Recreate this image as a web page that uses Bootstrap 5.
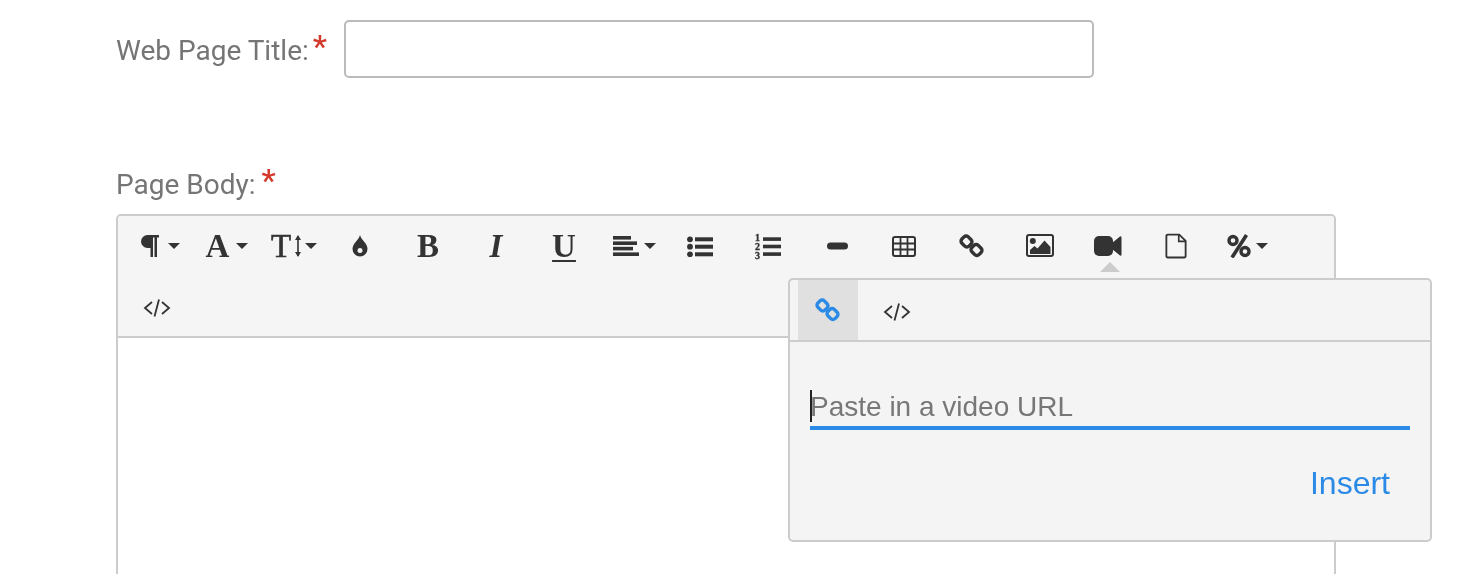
<!DOCTYPE html>
<html lang="en">
<head>
<meta charset="utf-8">
<title>Page editor</title>
<link href="https://cdn.jsdelivr.net/npm/bootstrap@5.3.0/dist/css/bootstrap.min.css" rel="stylesheet">
<style>
html,body{height:574px;overflow:hidden;background:#fff}
body{font-family:Roboto,sans-serif;color:#333}
.pg{padding:20px 0 0 116px;width:1480px;height:574px;overflow:hidden;will-change:transform}
.lbl{font-size:28px;color:#757575;margin:0}
.req{color:#d33a2c;font-size:32px;font-weight:500;line-height:1;display:inline-block;position:relative;margin-left:4px}
.title-row{height:58px}
.title-row .lbl{width:228px;flex:none;white-space:nowrap;line-height:61px}
.title-row .req{top:-3px}
.title-row .form-control{width:750px;height:58px;border:2px solid #bbb;border-radius:5px;box-shadow:none}
.body-lbl{margin-top:78px;height:58px}
.body-lbl .lbl{line-height:58px}
.body-lbl .req{top:-3px;margin-left:6px}
.ed{position:relative;width:1220px;height:500px;border:2px solid #ccc;border-radius:5px;background:#fff}
.tb{background:#f5f5f5;border-bottom:2px solid #ccc;height:122px;padding:0 8px 0 4px;border-radius:3px 3px 0 0;flex-wrap:wrap;align-content:flex-start;row-gap:2px}
.tbtn{width:68px;height:60px;padding:0;border:0;border-radius:0;background:none;color:#333;display:flex;align-items:center;justify-content:center;line-height:1}
.serif{font-family:"Liberation Serif",serif;font-size:33px;font-weight:700;color:#333}
.tt{font-weight:400;-webkit-text-stroke:.6px #333}
.under{text-decoration:underline;text-decoration-thickness:2px;text-underline-offset:3px}
.pa{padding-left:6px}
.pt{padding-left:4px}
.pp{padding-left:9px}
.pc{padding-left:2px}
.ph{padding-left:2px}
.pct{padding-left:6px}
.car{display:inline-block;width:0;height:0;border:6px solid transparent;border-top:6px solid #333;border-bottom:0;margin-left:5px}
.c9{margin-left:9px}
.c7{margin-left:7px}
.c4{margin-left:4px}
.pop{position:absolute;left:670px;top:62px;width:644px;height:264px;background:#f4f4f4;border:2px solid #ccc;border-radius:5px}
.pop-arrow{position:absolute;left:982px;top:46px;width:0;height:0;border:10px solid transparent;border-bottom:10px solid #ccc;border-top:0}
.tabs{height:62px;border-bottom:2px solid #ccc;padding-left:8px}
.tab{width:60px;height:60px;padding:0;border:0;border-radius:0;display:flex;align-items:center;justify-content:center;background:none}
.tab.on{background:#e0e0e0}
.tab+.tab{width:78px;padding-top:3px}
.fld{position:relative;margin:40px 20px 0;height:48px;border-bottom:4px solid #2a8ae6}
.fld input{width:100%;height:50px;border:0;background:none;outline:0;padding:0;font-family:"Liberation Sans",sans-serif;font-size:28px;color:#333}
.fld input::placeholder{color:#777;opacity:1}
.cur{position:absolute;left:0;top:8px;width:2px;height:32px;background:#222}
.ins{font-family:"Liberation Sans",sans-serif;font-size:32px;color:#2a8ae6;padding:0;border:0;background:none;line-height:36px}
.foot{margin-top:35px;padding-right:40px}
.num{font-family:"Liberation Serif",serif;font-weight:700;font-size:10px;stroke:#333;stroke-width:.35px}
svg{display:block}
</style>
</head>
<body>
<div class="pg">
  <div class="d-flex title-row">
    <label class="lbl" for="t">Web Page Title:<span class="req">*</span></label>
    <input id="t" class="form-control" type="text">
  </div>
  <div class="body-lbl"><span class="lbl">Page Body:<span class="req">*</span></span></div>
  <div class="ed">
    <div class="tb d-flex">
      <button class="btn tbtn pp" aria-label="Paragraph format"><svg width="18" height="22" viewBox="0 0 18 22" fill="#333"><path d="M18 0H6.500a6.500 6.500 0 0 0 0 13H9.500v9H12V2.500h1.500V22H16V2.500h2z"/></svg><i class="car c9"></i></button>
      <button class="btn tbtn pa"><span class="serif">A</span><i class="car c7"></i></button>
      <button class="btn tbtn pt"><span class="serif tt">T</span><svg class="ms-1" width="6" height="24" viewBox="0 0 6 24"><path d="M3 2v20" stroke="#333" stroke-width="1.600"/><path d="M0 6l3-5 3 5zM0 18l3 5 3-5z" fill="#333"/></svg><i class="car c4"></i></button>
      <button class="btn tbtn"><svg width="16" height="22" viewBox="0 0 16 22"><path fill="#333" fill-rule="evenodd" d="M8 0c1 5 7.500 8 7.500 14a7.500 7.500 0 0 1-15 0C.5 8 7 5 8 0zM8 13a2.500 2.500 0 1 0 0 5a2.500 2.500 0 1 0 0-5z"/></svg></button>
      <button class="btn tbtn"><span class="serif">B</span></button>
      <button class="btn tbtn"><span class="serif fst-italic">I</span></button>
      <button class="btn tbtn"><span class="serif under">U</span></button>
      <button class="btn tbtn pt"><svg width="26" height="22" viewBox="0 0 26 22" fill="#333"><rect y="1" width="18" height="3.600"/><rect y="6.400" width="24" height="3.600"/><rect y="11.800" width="20" height="3.600"/><rect y="17.400" width="26" height="3.600"/></svg><i class="car"></i></button>
      <button class="btn tbtn"><svg width="26" height="22" viewBox="0 0 26 22" fill="#333"><circle cx="3" cy="4.300" r="2.900"/><circle cx="3" cy="11.700" r="2.900"/><circle cx="3" cy="19.300" r="2.900"/><rect x="8" y="2.300" width="18" height="4"/><rect x="8" y="9.700" width="18" height="4"/><rect x="8" y="17.300" width="18" height="4"/></svg></button>
      <button class="btn tbtn"><svg width="26" height="28" viewBox="0 0 26 28" fill="#333"><text class="num"><tspan x="0" y="9">1</tspan><tspan x="0" y="18">2</tspan><tspan x="0" y="27">3</tspan></text><rect x="8" y="5.300" width="18" height="3.600"/><rect x="8" y="12.700" width="18" height="3.600"/><rect x="8" y="20.300" width="18" height="3.600"/></svg></button>
      <button class="btn tbtn ph"><svg width="21" height="8" viewBox="0 0 21 8"><rect y=".5" width="21" height="7" rx="3.500" fill="#333"/></svg></button>
      <button class="btn tbtn"><svg width="24" height="21" viewBox="0 0 24 21" fill="none" stroke="#333" stroke-width="2"><rect x="1" y="1" width="22" height="19" rx="2"/><path d="M1 7.500h22M1 13.500h22M8.500 1v19M15.500 1v19" stroke-width="1.800"/></svg></button>
      <button class="btn tbtn"><svg width="26" height="26" viewBox="0 0 26 26" fill="none" stroke="#333" stroke-width="3.400"><rect x="2.500" y="4" width="10" height="9" rx="3" transform="rotate(45 7.500 8.500)"/><rect x="12.500" y="12.500" width="10" height="9" rx="3" transform="rotate(45 17.500 17)"/></svg></button>
      <button class="btn tbtn"><svg width="28" height="24" viewBox="0 0 28 24"><rect x="1" y="1" width="26" height="21" rx="2" fill="none" stroke="#333" stroke-width="2"/><circle cx="6.800" cy="7" r="3" fill="#333"/><path d="M4 20v-4l4.500-4 3 2.500 7-8 6 6.500v7z" fill="#333"/></svg></button>
      <button class="btn tbtn"><svg width="28" height="20" viewBox="0 0 28 20" fill="#333"><rect x="0" y="0" width="19" height="20" rx="5"/><path d="M18 7l8-6.500a1 1 0 0 1 1.500 1v17a1 1 0 0 1-1.500 1L18 13z"/></svg></button>
      <button class="btn tbtn"><svg width="22" height="26" viewBox="0 0 24 28" fill="none" stroke="#333" stroke-width="2"><path d="M15.500 1.500H3a1.500 1.500 0 0 0-1.500 1.500v22a1.500 1.500 0 0 0 1.500 1.500h18a1.500 1.500 0 0 0 1.500-1.500V8.500z"/><path d="M15 1.500V9h7.500" stroke-width="1.800"/></svg></button>
      <button class="btn tbtn pct"><svg width="24" height="24" viewBox="0 0 24 24" fill="none" stroke="#333"><circle cx="6" cy="6.500" r="4" stroke-width="3.400"/><circle cx="18" cy="17.500" r="4" stroke-width="3.400"/><path d="M19.500 1L5 23.500" stroke-width="3.600"/></svg><i class="car"></i></button>
      <button class="btn tbtn pc"><svg width="28" height="22" viewBox="0 0 28 22" fill="none" stroke="#333" stroke-width="1.800"><path d="M9 5l-7 6 7 6M19 5l7 6-7 6M16 2.500l-4.500 17"/></svg></button>
    </div>
    <div class="pop-arrow"></div>
    <div class="pop">
      <div class="tabs d-flex">
        <button class="btn tab on"><svg width="26" height="26" viewBox="0 0 26 26" fill="none" stroke="#2a8ae6" stroke-width="3.400"><rect x="2.500" y="4" width="10" height="9" rx="3" transform="rotate(45 7.500 8.500)"/><rect x="12.500" y="12.500" width="10" height="9" rx="3" transform="rotate(45 17.500 17)"/></svg></button>
        <button class="btn tab"><svg width="28" height="22" viewBox="0 0 28 22" fill="none" stroke="#333" stroke-width="1.800"><path d="M9 5l-7 6 7 6M19 5l7 6-7 6M16 2.500l-4.500 17"/></svg></button>
      </div>
      <div class="fld"><span class="cur"></span><input type="text" placeholder="Paste in a video URL"></div>
      <div class="foot d-flex justify-content-end"><button class="ins">Insert</button></div>
    </div>
  </div>
</div>
</body>
</html>
